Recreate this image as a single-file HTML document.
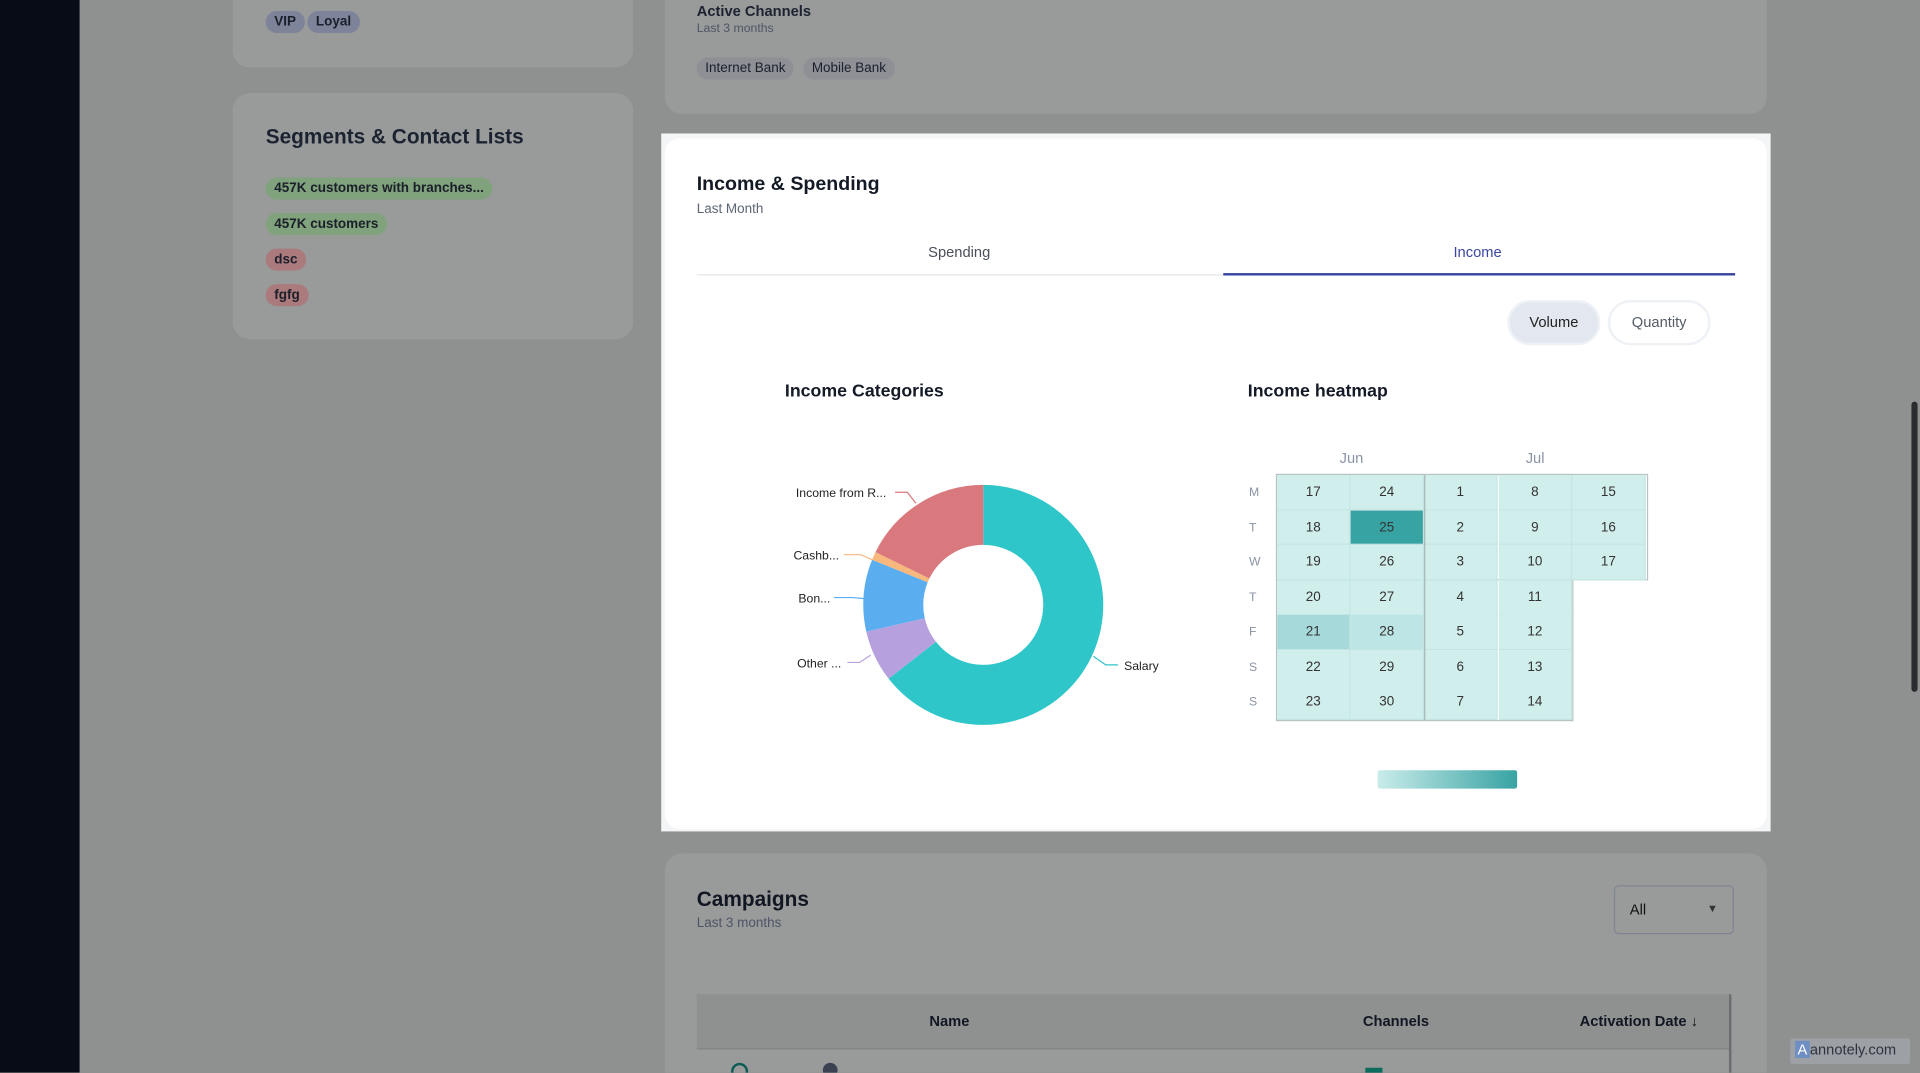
<!DOCTYPE html>
<html><head><meta charset="utf-8"><style>
*{box-sizing:border-box;margin:0;padding:0}
html,body{width:1920px;height:1073px;overflow:hidden;background:#8f9090;font-family:"Liberation Sans",sans-serif}
#clip{position:relative;width:1920px;height:1073px;overflow:hidden}
#w{position:absolute;left:0;top:0;width:1568px;height:876px;overflow:hidden;transform:scale(1.22449);transform-origin:0 0}
.a{position:absolute}
.card{position:absolute;background:#999a9a;border-radius:14px}
.tag{position:absolute;font-size:11px;font-weight:bold;padding:3px 7px;border-radius:9px;color:#1a1f2a}
.t{position:absolute;white-space:nowrap}
.cell{position:absolute;width:60px;height:28.5px;font-size:11px;color:#333;text-align:center;line-height:28.5px;background:#d0eeec;border-right:1px solid #c4e4e2;border-bottom:1px solid #c4e4e2}
.dl{position:absolute;font-size:10px;color:#8a94a4;left:1020px}
</style></head><body><div id="clip"><div id="w">
<div class="a" style="left:0;top:0;width:65px;height:876px;background:#080c17"></div>

<div class="card" style="left:190px;top:-20px;width:327px;height:75px"></div>
<div class="tag" style="left:217px;top:9px;background:#7d8399">VIP</div>
<div class="tag" style="left:251px;top:9px;background:#7d8399">Loyal</div>

<div class="card" style="left:190px;top:76px;width:327px;height:201px"></div>
<div class="t" style="left:217px;top:102px;font-size:17px;font-weight:bold;color:#1b2230">Segments &amp; Contact Lists</div>
<div class="tag" style="left:217px;top:145px;background:#80a27c">457K customers with branches...</div>
<div class="tag" style="left:217px;top:174px;background:#80a27c">457K customers</div>
<div class="tag" style="left:217px;top:203px;background:#ab7a7c">dsc</div>
<div class="tag" style="left:217px;top:232px;background:#ab7a7c">fgfg</div>

<div class="card" style="left:543px;top:-20px;width:900px;height:113px"></div>
<div class="t" style="left:569px;top:2px;font-size:12px;font-weight:bold;color:#1b2230">Active Channels</div>
<div class="t" style="left:569px;top:18px;font-size:10px;color:#4d5566">Last 3 months</div>
<div class="tag" style="left:569px;top:47px;background:#8e9096;font-weight:normal">Internet Bank</div>
<div class="tag" style="left:656px;top:47px;background:#8e9096;font-weight:normal">Mobile Bank</div>

<div class="card" style="left:543px;top:697px;width:900px;height:220px"></div>
<div class="t" style="left:569px;top:725px;font-size:17px;font-weight:bold;color:#111722">Campaigns</div>
<div class="t" style="left:569px;top:748px;font-size:11px;color:#4d5566">Last 3 months</div>
<div class="a" style="left:1318px;top:723px;width:98px;height:40px;border:1px solid #7e8594;border-radius:4px"></div>
<div class="t" style="left:1331px;top:736px;font-size:12px;color:#111">All</div>
<div class="t" style="left:1394px;top:737px;font-size:9px;color:#333">▼</div>
<div class="a" style="left:569px;top:812px;width:843px;height:45px;background:#8f9090;border-bottom:1px solid #838586"></div>
<div class="t" style="left:759px;top:827px;font-size:12px;font-weight:bold;color:#111722">Name</div>
<div class="t" style="left:1113px;top:827px;font-size:12px;font-weight:bold;color:#111722">Channels</div>
<div class="t" style="left:1290px;top:827px;font-size:12px;font-weight:bold;color:#111722">Activation Date ↓</div>
<div class="a" style="left:1412px;top:812px;width:2px;height:90px;background:#6b6d70"></div>
<div class="a" style="left:597px;top:868px;width:14px;height:14px;border:2px solid #0c5c55;border-radius:50%"></div>
<div class="a" style="left:672px;top:868px;width:12px;height:12px;background:#3a4150;border-radius:50%"></div>
<div class="a" style="left:1115px;top:872px;width:14px;height:6px;background:#0f6b5d"></div>

<div class="a" style="left:1561px;top:328px;width:5px;height:237px;background:#2a2c30;border-radius:3px"></div>
<div class="a" style="left:1462px;top:848px;width:98px;height:21px;background:#9da0a4;border-radius:2px"></div>
<div class="t" style="left:1466px;top:850px;font-size:12px;color:#2d3340"><span style="background:#6f8fc4;color:#fff;padding:0 2px">A</span>annotely.com</div>

<div class="a" style="left:540px;top:109px;width:906px;height:570px;background:#f4f5f7"></div>
<div class="a" style="left:543px;top:113px;width:900px;height:564px;background:#fff;border-radius:12px"></div>
<div class="t" style="left:569px;top:142px;font-size:16px;font-weight:bold;color:#141a26">Income &amp; Spending</div>
<div class="t" style="left:569px;top:165px;font-size:11px;color:#5d6575">Last Month</div>
<div class="t" style="left:758px;top:199px;font-size:12px;color:#4a4f5a">Spending</div>
<div class="t" style="left:1187px;top:199px;font-size:12px;color:#3a46a0">Income</div>
<div class="a" style="left:569px;top:224px;width:848px;height:1px;background:#e3e5e8"></div>
<div class="a" style="left:999px;top:223px;width:418px;height:2px;background:#3a46a0"></div>
<div class="a" style="left:1231px;top:245px;width:76px;height:37px;background:#e3e8f0;border:2px solid #eef1f5;border-radius:19px;font-size:12px;color:#222;text-align:center;line-height:33px">Volume</div>
<div class="a" style="left:1313px;top:245px;width:84px;height:37px;background:#fff;border:2px solid #eef1f5;border-radius:19px;font-size:12px;color:#555c68;text-align:center;line-height:33px">Quantity</div>
<div class="t" style="left:641px;top:312px;font-size:14.5px;font-weight:bold;color:#141a26">Income Categories</div>
<div class="t" style="left:1019px;top:312px;font-size:14.5px;font-weight:bold;color:#141a26">Income heatmap</div>

<svg class="a" style="left:0;top:0" width="1568" height="876">
<g transform="rotate(-90 803 494)" fill="none" stroke-width="49">
<circle cx="803" cy="494" r="73.5" stroke="#2fc6c9" stroke-dasharray="297.6 500"/>
<circle cx="803" cy="494" r="73.5" stroke="#b6a1de" stroke-dasharray="32.1 500" stroke-dashoffset="-297.6"/>
<circle cx="803" cy="494" r="73.5" stroke="#5aaeef" stroke-dasharray="44.9 500" stroke-dashoffset="-329.7"/>
<circle cx="803" cy="494" r="73.5" stroke="#f8b77d" stroke-dasharray="5.1 500" stroke-dashoffset="-374.6"/>
<circle cx="803" cy="494" r="73.5" stroke="#d9797e" stroke-dasharray="82.1 500" stroke-dashoffset="-379.7"/>
</g>
<g fill="none" stroke-width="1">
<polyline points="731,402 741,402 748,411" stroke="#d9797e"/>
<polyline points="689,453 703,453 712,457" stroke="#f8b77d"/>
<polyline points="681,488 696,488 707,489" stroke="#5aaeef"/>
<polyline points="692,541 702,541 711,535" stroke="#b6a1de"/>
<polyline points="893,536 903,543 913,543" stroke="#2fc6c9"/>
</g>
<g font-family="Liberation Sans" font-size="10" fill="#222">
<text x="650" y="406">Income from R...</text>
<text x="648" y="457">Cashb...</text>
<text x="652" y="492">Bon...</text>
<text x="651" y="545">Other ...</text>
<text x="918" y="547">Salary</text>
</g>
</svg>

<div class="t" style="left:1094px;top:367px;font-size:12px;color:#8a94a4">Jun</div>
<div class="t" style="left:1246px;top:367px;font-size:12px;color:#8a94a4">Jul</div>
<div class="dl" style="top:397px">M</div><div class="dl" style="top:426px">T</div><div class="dl" style="top:454px">W</div><div class="dl" style="top:483px">T</div><div class="dl" style="top:511px">F</div><div class="dl" style="top:540px">S</div><div class="dl" style="top:568px">S</div>

<div class="a" style="left:1042px;top:387px;width:304px;height:87px;border:1px solid #b8c4c4"></div>
<div class="a" style="left:1042px;top:387px;width:243px;height:202px;border:1px solid #b8c4c4"></div>
<div class="cell" style="left:1043px;top:388px">17</div><div class="cell" style="left:1103px;top:388px">24</div><div class="cell" style="left:1163px;top:388px">1</div><div class="cell" style="left:1224px;top:388px">8</div><div class="cell" style="left:1284px;top:388px">15</div>
<div class="cell" style="left:1043px;top:416.5px">18</div><div class="cell" style="left:1103px;top:416.5px;background:#38a3a3">25</div><div class="cell" style="left:1163px;top:416.5px">2</div><div class="cell" style="left:1224px;top:416.5px">9</div><div class="cell" style="left:1284px;top:416.5px">16</div>
<div class="cell" style="left:1043px;top:445px">19</div><div class="cell" style="left:1103px;top:445px">26</div><div class="cell" style="left:1163px;top:445px">3</div><div class="cell" style="left:1224px;top:445px">10</div><div class="cell" style="left:1284px;top:445px">17</div>
<div class="cell" style="left:1043px;top:474px">20</div><div class="cell" style="left:1103px;top:474px">27</div><div class="cell" style="left:1163px;top:474px">4</div><div class="cell" style="left:1224px;top:474px">11</div>
<div class="cell" style="left:1043px;top:502px;background:#a6dada">21</div><div class="cell" style="left:1103px;top:502px;background:#bde5e5">28</div><div class="cell" style="left:1163px;top:502px">5</div><div class="cell" style="left:1224px;top:502px">12</div>
<div class="cell" style="left:1043px;top:531px">22</div><div class="cell" style="left:1103px;top:531px">29</div><div class="cell" style="left:1163px;top:531px">6</div><div class="cell" style="left:1224px;top:531px">13</div>
<div class="cell" style="left:1043px;top:559px">23</div><div class="cell" style="left:1103px;top:559px">30</div><div class="cell" style="left:1163px;top:559px">7</div><div class="cell" style="left:1224px;top:559px">14</div>
<div class="a" style="left:1163px;top:388px;width:1px;height:200px;background:#a9b6b6"></div>
<div class="a" style="left:1125px;top:629px;width:114px;height:15px;border-radius:2px;background:linear-gradient(90deg,#c9ecea,#38a3a3)"></div>
</div></div></body></html>
